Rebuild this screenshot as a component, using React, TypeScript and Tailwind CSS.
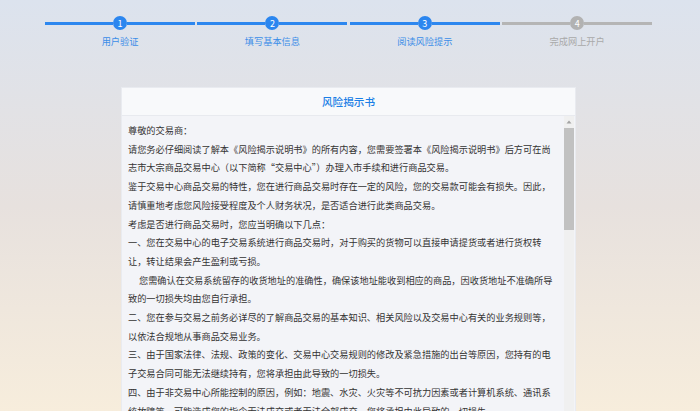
import React from 'react';

const steps = [
  { n: 1, label: '用户验证', done: true },
  { n: 2, label: '填写基本信息', done: true },
  { n: 3, label: '阅读风险提示', done: true },
  { n: 4, label: '完成网上开户', done: false },
];

// 每段按原样换行
const lines: { text: string; indent?: boolean }[] = [
  { text: '尊敬的交易商：' },
  { text: '请您务必仔细阅读了解本《风险揭示说明书》的所有内容，您需要签署本《风险揭示说明书》后方可在尚' },
  { text: '志市大宗商品交易中心（以下简称“交易中心”）办理入市手续和进行商品交易。' },
  { text: '鉴于交易中心商品交易的特性，您在进行商品交易时存在一定的风险，您的交易款可能会有损失。因此，' },
  { text: '请慎重地考虑您风险接受程度及个人财务状况，是否适合进行此类商品交易。' },
  { text: '考虑是否进行商品交易时，您应当明确以下几点：' },
  { text: '一、您在交易中心的电子交易系统进行商品交易时，对于购买的货物可以直接申请提货或者进行货权转' },
  { text: '让，转让结果会产生盈利或亏损。' },
  { text: '您需确认在交易系统留存的收货地址的准确性，确保该地址能收到相应的商品，因收货地址不准确所导', indent: true },
  { text: '致的一切损失均由您自行承担。' },
  { text: '二、您在参与交易之前务必详尽的了解商品交易的基本知识、相关风险以及交易中心有关的业务规则等，' },
  { text: '以依法合规地从事商品交易业务。' },
  { text: '三、由于国家法律、法规、政策的变化、交易中心交易规则的修改及紧急措施的出台等原因，您持有的电' },
  { text: '子交易合同可能无法继续持有，您将承担由此导致的一切损失。' },
  { text: '四、由于非交易中心所能控制的原因，例如：地震、水灾、火灾等不可抗力因素或者计算机系统、通讯系' },
  { text: '统故障等，可能造成您的指令无法成交或者无法全部成交，您将承担由此导致的一切损失。' },
  { text: '五、由于交易中心的电子交易系统故障或网络故障等原因，可能造成您的指令无法及时成交。' },
];

const Steps: React.FC = () => (
  <div className="flex gap-[2.4px] pl-[45px] pt-[16px]">
    {steps.map((s) => {
      const line = s.done ? 'bg-[#2d87ef]' : 'bg-[#b5b5b5]';
      return (
        <div key={s.n} className="w-[150px] flex flex-col">
          <div className="flex items-center h-[14px]">
            <div className={`flex-1 h-[3px] ${line}`} />
            <div
              className={`w-[14px] h-[14px] rounded-full flex items-center justify-center text-white text-[9px] leading-none ${
                s.done ? 'bg-[#2b86ef]' : 'bg-[#b2b2b2]'
              }`}
            >
              {s.n}
            </div>
            <div className={`flex-1 h-[3px] ${line}`} />
          </div>
          <div
            className={`mt-[5px] text-center text-[9.2px] leading-[12px] ${
              s.done ? 'text-[#3b8de8]' : 'text-[#a9a9a9]'
            }`}
          >
            {s.label}
          </div>
        </div>
      );
    })}
  </div>
);

const App: React.FC = () => {
  return (
    <div
      className="w-[700px] h-[411px] overflow-hidden bg-gradient-to-b from-[#dce3ee] via-[#e7e1de] to-[#f7eddc]"
      style={{ fontFamily: '"Noto Sans CJK SC", "Noto Sans", sans-serif' }}
    >
      <Steps />

      <div className="ml-[121px] mt-[40px] w-[455px] h-[330px] border border-[#e9ebf0] bg-[#f3f4f8] flex flex-col">
        <div className="h-[28px] shrink-0 flex items-center justify-center bg-[#f8f9fb] border-b border-[#e8eaef]">
          <span className="text-[10.6px] font-medium text-[#1b7fe6]">风险揭示书</span>
        </div>

        <div className="flex flex-1 min-h-0">
          <div className="flex-1 overflow-hidden pl-[6px] pt-[5px] text-[9.2px] leading-[18.7px] text-[#333333]">
            {lines.map((l, i) => (
              <div key={i} className={`whitespace-nowrap ${l.indent ? 'pl-[11px]' : ''}`}>
                {l.text}
              </div>
            ))}
          </div>

          {/* 滚动条 */}
          <div className="w-[10px] mr-[1px] bg-[#f0f0f0] flex flex-col items-center">
            <div className="h-[12px] flex items-center justify-center">
              <svg width="6" height="4" viewBox="0 0 6 4">
                <path d="M3 0.5 L5.5 3.5 L0.5 3.5 Z" fill="#a3a3a3" />
              </svg>
            </div>
            <div className="w-[10px] h-[102px] bg-[#c1c1c1]" />
          </div>
        </div>
      </div>
    </div>
  );
};

export default App;
